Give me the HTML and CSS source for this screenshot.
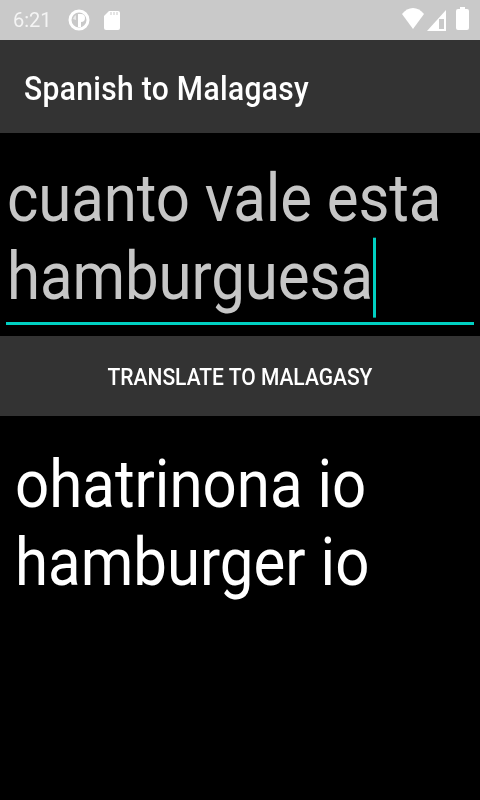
FILE: index.html
```html
<!DOCTYPE html>
<html lang="es">
<head>
<meta charset="utf-8">
<title>Spanish to Malagasy</title>
<link rel="stylesheet" href="styles.css">
</head>
<body>
<div class="status">
  <div class="status-left">
    <span class="time">6:21</span>
    <svg class="ic-p" viewBox="0 0 22 22"><circle cx="11" cy="11" r="9" fill="none" stroke="#fff" stroke-width="3"/><path d="M10 5v13h3v-5a4 4 0 0 0 0-8z" fill="#fff"/><path d="M5 10a6 6 0 0 1 3-4v5z" fill="#fff" opacity=".6"/></svg>
    <svg class="ic-sd" viewBox="0 0 18 20"><path d="M6 1h9a2 2 0 0 1 2 2v15a2 2 0 0 1-2 2H3a2 2 0 0 1-2-2V6z" fill="#fff"/><path d="M8 2v3M11 2v3M14 2v3" stroke="#c9c9c9" stroke-width="1"/></svg>
  </div>
  <div class="status-right">
    <svg class="ic-wifi" viewBox="0 0 22 21"><path d="M0 6C6 -2 16 -2 22 6L11 21z" fill="#fff"/></svg>
    <svg class="ic-signal" viewBox="0 0 19 21"><path d="M0 21L19 0v21z" fill="#fff"/><path d="M12 9h5v10h-5z" fill="#c9c9c9"/></svg>
    <svg class="ic-batt" viewBox="0 0 13 23"><path d="M4 0h5v2h2a2 2 0 0 1 2 2v17a2 2 0 0 1-2 2H2a2 2 0 0 1-2-2V4a2 2 0 0 1 2-2h2z" fill="#fff"/></svg>
  </div>
</div>
<header class="appbar"><span class="title">Spanish to Malagasy</span></header>
<main class="content">
  <div class="field">
    <div class="input"><div class="input-text">cuanto vale esta hamburguesa<span class="caret"></span></div></div>
  </div>
  <button class="btn"><span class="btn-label">TRANSLATE TO MALAGASY</span></button>
  <p class="result">ohatrinona io hamburger io</p>
</main>
</body>
</html>
```
FILE: styles.css
```css
* { box-sizing: border-box; }
html, body { margin: 0; padding: 0; }
body {
  width: 480px;
  height: 800px;
  overflow: hidden;
  background: #000;
  font-family: Roboto, "Liberation Sans", sans-serif;
  display: flex;
  flex-direction: column;
}
.status {
  height: 40px;
  flex: none;
  background: #c9c9c9;
  display: flex;
  justify-content: space-between;
  align-items: center;
  padding: 0 11px 0 13px;
}
.status-left, .status-right { display: flex; align-items: center; }
.time { color: #f4f4f4; font-size: 20px; width: 55px; filter: blur(.4px); }
.ic-p { width: 22px; height: 22px; margin-right: 13px; }
.ic-sd { width: 18px; height: 20px; }
.ic-wifi { width: 22px; height: 21px; margin-right: 3px; margin-top: -3px; }
.ic-signal { width: 19px; height: 21px; margin-right: 10px; }
.ic-batt { width: 13px; height: 23px; margin-top: -4px; }
.appbar {
  height: 93px;
  flex: none;
  background: #333;
  color: #fff;
  font-size: 30px;
  font-weight: 500;
  letter-spacing: 0.33px;
  line-height: 97px;
  padding-left: 24px;
  white-space: nowrap;
}
.title {
  display: inline-block;
  transform: scaleY(1.11);
  filter: blur(.4px);
}
.content { flex: 1; display: flex; flex-direction: column; }
.field { padding: 0 6px; height: 203px; flex: none; }
.input {
  height: 192px;
  border-bottom: 3px solid #00d0c2;
  padding: 27px 2px 0 1px;
}
.input-text {
  color: #c6c6c6;
  font-size: 60px;
  line-height: 70.3px;
  letter-spacing: -0.1px;
  transform: scaleY(1.11);
  transform-origin: top left;
  filter: blur(.4px);
}
.caret {
  display: inline-block;
  width: 3px;
  height: 72px;
  margin: 0 -3px -2px 0;
  background: #00d0c2;
  vertical-align: top;
}
.btn {
  display: block;
  width: 480px;
  height: 80px;
  flex: none;
  border: 0;
  background: #333;
  color: #fff;
  font: 500 21px Roboto, "Liberation Sans", sans-serif;
  padding: 2px 0 0;
}
.btn-label {
  display: inline-block;
  transform: scaleY(1.11);
  filter: blur(.4px);
}
.result {
  margin: 0;
  padding: 27px 16px 0 15px;
  color: #fff;
  font-size: 60px;
  line-height: 70.3px;
  transform: scaleY(1.11);
  transform-origin: top left;
  filter: blur(.4px);
}
```
